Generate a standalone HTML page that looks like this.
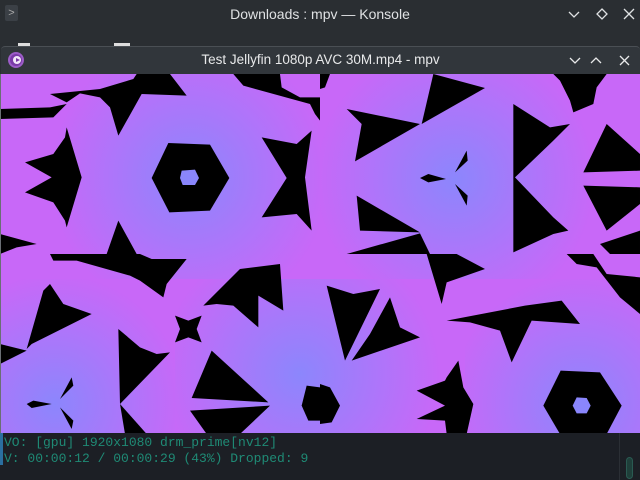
<!DOCTYPE html>
<html><head><meta charset="utf-8"><style>
*{margin:0;padding:0;box-sizing:border-box}
body{width:640px;height:480px;overflow:hidden;background:#2a2e32;font-family:"Liberation Sans",sans-serif;position:relative}
.kt{position:absolute;left:0;top:0;width:640px;height:46px;background:#2a2e32}
.kt .t{position:absolute;top:6px;width:100%;text-align:center;color:#dfe1e3;font-size:14px}
.mw{position:absolute;left:1px;top:46px;width:639px;height:28px;background:#31363b;border-radius:4px 4px 0 0;border-top:1px solid #4a4f54}
.mw .t{position:absolute;top:5px;width:100%;text-align:center;color:#e8e9ea;font-size:13.5px}
.vid{position:absolute;left:0;top:74px;width:640px;height:360px}
.term{position:absolute;left:0;top:433px;width:640px;height:47px;background:#1c1f25;font-family:"Liberation Mono",monospace;font-size:13px;color:#1f8a75;line-height:16px;padding-left:4px;padding-top:2px}
</style></head><body>
<div class="kt">
<div style="position:absolute;left:5px;top:5px;width:13px;height:16px;background:#3b4046;border-radius:2px;color:#aaa;font-size:11px;text-align:center;line-height:16px">&gt;</div>
<div class="t">Downloads : mpv — Konsole</div>
<svg style="position:absolute;left:565px;top:7px" width="70" height="16" fill="none" stroke="#dfe1e3" stroke-width="1.3"><path d="M4 5l5 5 5-5"/><path d="M37 2l5 5-5 5-5-5z"/><path d="M59 2l10 10M69 2l-10 10"/></svg>
<div style="position:absolute;left:18px;top:43px;width:12px;height:3px;background:#ddd"></div>
<div style="position:absolute;left:114px;top:43px;width:16px;height:3px;background:#ddd"></div>
</div>
<div class="mw">
<div style="position:absolute;left:7px;top:5px;width:16px;height:16px;border-radius:50%;background:#7a3aa8;border:2px solid #9c5cc8"><div style="position:absolute;left:3px;top:2px;width:8px;height:8px;border-radius:50%;background:#f3e8fa"></div><div style="position:absolute;left:6px;top:4px;width:0;height:0;border-left:4px solid #7a3aa8;border-top:2px solid transparent;border-bottom:2px solid transparent"></div></div>
<div class="t">Test Jellyfin 1080p AVC 30M.mp4 - mpv</div>
<svg style="position:absolute;left:565px;top:6px" width="70" height="16" fill="none" stroke="#e8e9ea" stroke-width="1.3"><path d="M4 5l5 5 5-5"/><path d="M25 10l5-5 5 5"/><path d="M54 3l9 9M63 3l-9 9"/></svg>
</div>
<svg class="vid" width="640" height="360" viewBox="0 0 640 360">
<defs>
<radialGradient id="g1" cx="190" cy="103" r="140" gradientUnits="userSpaceOnUse"><stop offset="0" stop-color="#8c86fc"/><stop offset="1" stop-color="#c868f8"/></radialGradient>
<radialGradient id="g2" cx="455" cy="105" r="140" gradientUnits="userSpaceOnUse"><stop offset="0" stop-color="#8c86fc"/><stop offset="1" stop-color="#c868f8"/></radialGradient>
<radialGradient id="g3" cx="300" cy="300" r="140" gradientUnits="userSpaceOnUse"><stop offset="0" stop-color="#8c86fc"/><stop offset="1" stop-color="#c868f8"/></radialGradient>
<radialGradient id="g4" cx="55" cy="330" r="130" gradientUnits="userSpaceOnUse"><stop offset="0" stop-color="#8c86fc"/><stop offset="1" stop-color="#c868f8"/></radialGradient>
<radialGradient id="g5" cx="580" cy="330" r="130" gradientUnits="userSpaceOnUse"><stop offset="0" stop-color="#8c86fc"/><stop offset="1" stop-color="#c868f8"/></radialGradient>
</defs>
<rect width="640" height="360" fill="#b472fa"/>
<rect x="0" y="0" width="320" height="205" fill="url(#g1)"/>
<rect x="320" y="0" width="320" height="205" fill="url(#g2)"/>
<rect x="175" y="205" width="290" height="155" fill="url(#g3)"/>
<rect x="0" y="205" width="175" height="155" fill="url(#g4)"/>
<rect x="465" y="205" width="175" height="155" fill="url(#g5)"/>
<g fill="#000">
<g transform="scale(0.33333)">
<path d="M0 105L150 100L200 90L160 130L0 135Z"/>
<path d="M150 60L300 45L400 15L410 0L510 0L560 65L425 60L355 185L330 100L300 70L240 58L200 85Z"/>
<path d="M75 265L160 240L195 190L200 160L245 310L200 460L195 440L160 385L75 355L155 310Z"/>
<path d="M355 440L410 540L320 540Z"/>
<path d="M0 480L110 510L50 520L0 540Z"/>
<path d="M505 207L630 212L688 312L630 410L508 415L455 312Z"/>
<path d="M785 190L890 210L935 170L915 310L935 470L890 420L785 430L860 312Z"/>
<path d="M700 0L840 0L845 40L900 70L960 70L960 140L945 120L930 90L730 35Z"/>
</g>
<g transform="translate(320,0) scale(0.33333)">
<path d="M0 0L30 0L15 40L0 45Z"/>
<path d="M340 0L495 42L305 150Z"/>
<path d="M80 105L300 150L105 262L125 150Z"/>
<path d="M110 365L300 475L120 470Z"/>
<path d="M80 540L300 478L330 540Z"/>
<path d="M300 312L325 300L378 315L325 325Z"/><path d="M405 295L440 230L443 260Z"/><path d="M405 330L440 395L443 365Z"/>
<path d="M580 90L690 160L750 150L700 200L585 310L700 430L745 470L700 480L580 535Z"/>
<path d="M700 0L860 0L830 40L820 90L760 115L750 80L720 20Z"/>
<path d="M860 150L960 240L960 290L790 295Z"/>
<path d="M790 335L960 340L960 390L860 470Z"/>
<path d="M840 510L960 470L960 540L870 540Z"/>
</g>
<g transform="translate(0,180) scale(0.33333)">
<path d="M150 0L420 0L455 15L560 15L500 90L490 130L420 80L390 65L230 20L160 20Z"/>
<path d="M610 155L720 45L840 30L850 170L775 125L775 220L700 155L650 150Z"/>
<path d="M130 110L150 90L190 150L275 180L95 270L80 285Z"/>
<path d="M525 185L565 200L605 185L590 225L605 265L565 250L525 265L540 225Z"/>
<path d="M0 270L80 290L0 330Z"/>
<path d="M355 225L420 280L470 300L510 295L360 450Z"/>
<path d="M360 450L375 540L440 540Z"/>
<path d="M635 290L805 445L575 432Z"/>
<path d="M570 470L810 455L720 540L620 540Z"/>
<path d="M920 395L960 400L960 500L925 500L905 455Z"/>
<path d="M80 450L100 440L155 450L95 462Z"/><path d="M180 435L215 370L220 395Z"/><path d="M180 460L215 525L220 500Z"/>
</g>
<g transform="translate(320,180) scale(0.33333)">
<path d="M20 95L100 120L180 105L75 320Z"/>
<path d="M210 130L240 220L300 250L95 320L150 240Z"/>
<path d="M320 0L410 0L495 45L380 85L365 150Z"/>
<path d="M380 200L450 205L540 230L575 325L635 200L780 210L725 140L615 155Z"/>
<path d="M740 0L820 0L860 60L960 70L960 180L900 130L830 40L770 30Z"/>
<path d="M380 370L415 320L430 400L460 450L440 540L380 540L375 500L290 495L375 455L290 410L375 380Z"/>
<path d="M0 390L30 400L60 455L35 505L0 510Z"/>
<path d="M722 350L840 355L905 455L860 540L720 540L670 455Z"/>
</g>
</g>
<g fill="#8a86fc">
<path transform="scale(0.33333)" d="M545 290L585 287L597 312L585 333L548 333L540 312Z"/>
<path transform="translate(320,180) scale(0.33333)" d="M770 430L800 432L812 455L800 478L770 478L758 455Z"/>
</g>
<rect x="0" y="0" width="1" height="360" fill="#6a6f74"/>
</svg>
<div class="term">
<div style="position:absolute;left:0;top:0;width:3px;height:32px;background:#2b6fa0"></div>
<div>VO: [gpu] 1920x1080 drm_prime[nv12]</div>
<div>V: 00:00:12 / 00:00:29 (43%) Dropped: 9</div>
<div style="position:absolute;left:619px;top:0;width:1px;height:47px;background:#2b2f35"></div>
<div style="position:absolute;left:626px;top:24px;width:7px;height:22px;border-radius:4px;background:#1f3f3a;border:1px solid #2a5a52"></div>
</div>
</body></html>
